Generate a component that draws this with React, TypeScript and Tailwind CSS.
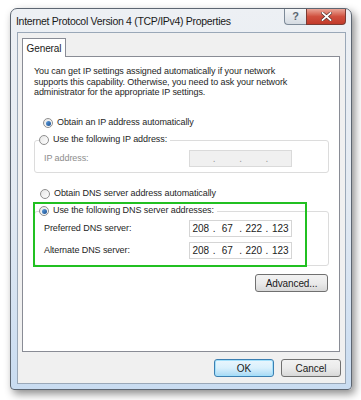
import React from "react";

const font = { fontFamily: '"Liberation Sans", Arial, sans-serif' };

function Radio({ checked }: { checked?: boolean }) {
  return (
    <span className="relative inline-flex h-[10px] w-[10px] shrink-0 items-center justify-center rounded-full border border-[#8f8f8f] bg-gradient-to-br from-[#e6e6e6] to-[#ffffff]">
      {checked && (
        <span className="h-[5px] w-[5px] rounded-full bg-gradient-to-br from-[#5fa0e0] to-[#1b4f8f]" />
      )}
    </span>
  );
}

function IpField({ parts, disabled }: { parts?: string[]; disabled?: boolean }) {
  const p = parts ?? ["", "", "", ""];
  return (
    <div
      className={`flex h-[17px] w-[103px] shrink-0 items-center border ${
        disabled ? "border-[#dadada] bg-[#f0f0f0] text-[#9a9a9a]" : "border-[#d5d5d5] bg-white text-[#222]"
      } text-[10px] tracking-normal`}
    >
      {p.map((v, i) => (
        <React.Fragment key={i}>
          <span className="w-[22px] text-center">{v}</span>
          {i < 3 && <span className="w-[5px] text-center">.</span>}
        </React.Fragment>
      ))}
    </div>
  );
}

export default function App() {
  return (
    <div className="h-[400px] w-[361px] overflow-hidden bg-white pl-[10px] pt-[8px]" style={font}>
      <div className="flex h-[382px] w-[342px] flex-col rounded-t-[7px] rounded-b-[4px] border border-[#5d6672] bg-gradient-to-b from-[#edf0f4] via-[#e3eaf2] to-[#c9dcf1] shadow-[3px_4px_8px_rgba(0,0,0,0.45)]">
        {/* title bar */}
        <div className="flex h-[23px] items-start">
          <div className="pl-[5px] pt-[6px] text-[10.5px] leading-[12px] tracking-[-0.3px] text-[#1a1a1a]">
            Internet Protocol Version 4 (TCP/IPv4) Properties
          </div>
          <div className="ml-auto mr-[5px] flex">
            <div className="flex h-[16px] w-[22px] items-center justify-center rounded-bl-[4px] border border-r-0 border-t-0 border-[#7d8a98] bg-gradient-to-b from-[#f4f6f8] to-[#d5dbe2] text-[11px] font-bold leading-none text-[#5c6670]">
              ?
            </div>
            <div className="flex h-[16px] w-[40px] items-center justify-center rounded-br-[4px] border border-t-0 border-[#7a3b33] bg-gradient-to-b from-[#e9a598] via-[#d0503f] to-[#c23a2a]">
              <svg width="11" height="9" viewBox="0 0 11 9">
                <path d="M1.5 1 L9.5 8 M9.5 1 L1.5 8" stroke="#4a2a26" strokeWidth="3" strokeLinecap="square" />
                <path d="M1.5 1 L9.5 8 M9.5 1 L1.5 8" stroke="#ffffff" strokeWidth="1.8" strokeLinecap="square" />
              </svg>
            </div>
          </div>
        </div>

        {/* client area */}
        <div className="ml-[6px] flex h-[352px] w-[329px] flex-col border border-[#9aa8b8] bg-[#f0f0f0]">
          {/* tabs */}
          <div className="flex pl-[4px] pt-[5px]">
            <div className="relative z-10 -mb-px flex h-[19px] w-[44px] items-center justify-center border border-b-0 border-[#898c95] bg-white text-[10px] tracking-[-0.1px] text-[#1a1a1a]">
              General
            </div>
          </div>
          <div className="ml-[4px] flex h-[296px] w-[318px] flex-col border border-[#898c95] bg-white text-[9px] tracking-[-0.08px] text-[#1e1e1e]">
            <div className="ml-[11px] mt-[9px] leading-[10.7px]">
              You can get IP settings assigned automatically if your network
              <br />
              supports this capability. Otherwise, you need to ask your network
              <br />
              administrator for the appropriate IP settings.
            </div>

            <div className="ml-[20px] mt-[19px] flex h-[12px] items-center gap-[4px]">
              <Radio checked />
              <span>Obtain an IP address automatically</span>
            </div>

            {/* IP group */}
            <div className="relative ml-[11px] mt-[11px] h-[33px] w-[295px] rounded-[3px] border border-[#dcdcdc]">
              <div className="absolute -top-[7px] left-[4px] flex h-[12px] items-center gap-[4px] bg-white pr-[3px]">
                <Radio />
                <span>Use the following IP address:</span>
              </div>
              <div className="flex items-center pl-[9px] pt-[9px]">
                <span className="w-[145px] text-[#8d8d8d]">IP address:</span>
                <IpField disabled />
              </div>
            </div>

            <div className="ml-[17px] mt-[15px] flex h-[12px] items-center gap-[4px]">
              <Radio />
              <span>Obtain DNS server address automatically</span>
            </div>

            {/* DNS group with green highlight */}
            <div className="relative ml-[11px] mt-[11px] h-[55px] w-[295px] rounded-[3px] border border-[#dcdcdc]">
              <div className="absolute -top-[7px] left-[4px] z-10 flex h-[12px] items-center gap-[4px] bg-white pr-[3px]">
                <Radio checked />
                <span>Use the following DNS server addresses:</span>
              </div>
              <div className="absolute -left-[2px] -top-[10px] z-20 h-[65px] w-[274px] border-2 border-[#21c021]" />
              <div className="flex flex-col gap-[5px] pl-[9px] pt-[8px]">
                <div className="flex items-center">
                  <span className="w-[145px]">Preferred DNS server:</span>
                  <IpField parts={["208", "67", "222", "123"]} />
                </div>
                <div className="flex items-center">
                  <span className="w-[145px]">Alternate DNS server:</span>
                  <IpField parts={["208", "67", "220", "123"]} />
                </div>
              </div>
            </div>

            <div className="mr-[11px] mt-[8px] flex justify-end">
              <div className="flex h-[18px] w-[73px] items-center justify-center rounded-[3px] border border-[#707070] bg-gradient-to-b from-[#f2f2f2] via-[#ebebeb] to-[#d8d8d8] text-[10px] tracking-[-0.1px] text-[#1a1a1a]">
                Advanced...
              </div>
            </div>
          </div>

          {/* bottom buttons */}
          <div className="mr-[4px] mt-[7px] flex justify-end gap-[7px]">
            <div className="flex h-[18px] w-[60px] items-center justify-center rounded-[3px] border border-[#3c7fb1] bg-gradient-to-b from-[#eaf6fd] via-[#d9f0fc] to-[#a7d9f5] text-[10px] text-[#1a1a1a] shadow-[inset_0_0_0_1px_#a3e0fb]">
              OK
            </div>
            <div className="flex h-[18px] w-[60px] items-center justify-center rounded-[3px] border border-[#707070] bg-gradient-to-b from-[#f2f2f2] via-[#ebebeb] to-[#d8d8d8] text-[10px] text-[#1a1a1a]">
              Cancel
            </div>
          </div>
        </div>
      </div>
    </div>
  );
}
